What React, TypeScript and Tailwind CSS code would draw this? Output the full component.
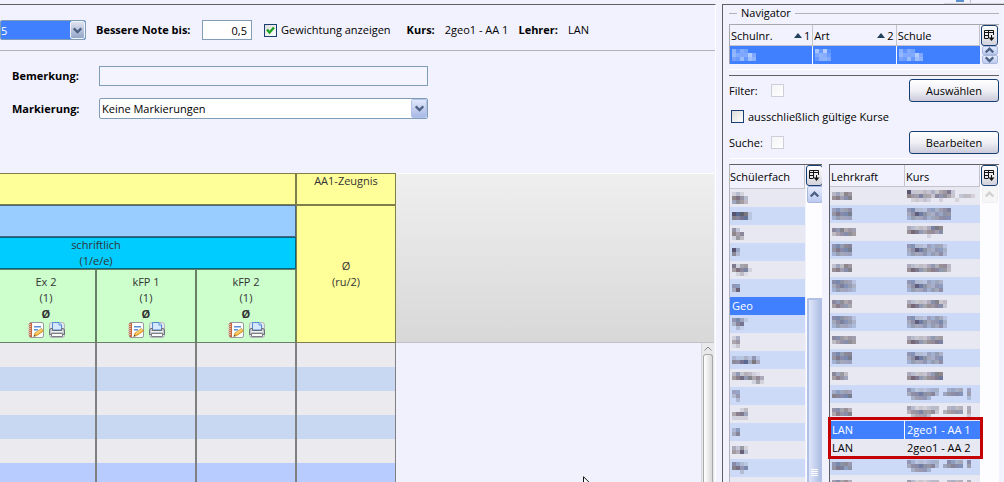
import { useState } from 'react'
import type { ReactNode } from 'react'

const schoolRow = [['646400', '858698', '747596'], ['85b20', '66940', '57680'], ['646400', '858698', '747596']]

// each entry is a list of mosaic lines, one hex digit per block
const subjects = [
  { blocks: ['2420', '9a74', '6874'] },
  { blocks: ['cbca2', '989a2'] },
  { blocks: ['730', '968', '274'] },
  { blocks: ['c5', '83'] },
  { blocks: ['92670', '7a892', '02410'] },
  { blocks: ['66', '5b'] },
  { name: 'Geo' },
  { blocks: ['6852', '4890', '0310'] },
  { blocks: ['25', '67', '13'] },
  { blocks: ['3224262', '879b5a5'] },
  { blocks: ['47354210', '79a79685', '00000262'] },
  { blocks: ['55', '36', '03'] },
  { blocks: ['0024', '6996', '2222'] },
  { blocks: ['36', '58'] },
  { blocks: ['5372', '75b4'] },
  { blocks: ['7532', '9a68', '0030'] },
  { blocks: ['5362', '7584'] },
]

const courses = [
  { a: ['46497', '89689'], b: ['c3334353679300000', '97696638786303442', '02323200200020000'] },
  { a: ['57567', '79789', '46555'], b: ['68332564678', '57b97546577', '46556456777'] },
  { a: ['879676', '467887'], b: ['5434359a9', '8b9768868', '000002000'] },
  { a: ['68688', '79789', '46555'], b: ['6733254552', '57b9754664', '4655646573'] },
  { a: ['36497', '89689'], b: ['54343575884', '8b976898774'] },
  { a: ['787652', '578764', '465543'], b: ['673325454', '57b975466', '465564657'] },
  { a: ['87867', '79776'], b: ['5434358934', '8b97687883'] },
  { a: ['787652', '578764', '465543'], b: ['6733254652', '57b9756684', '4655646573'] },
  { a: ['887676', '467887'], b: ['543435767', '8b9768899'] },
  { a: ['68688', '79789', '46555'], b: ['673325464', '57b975467', '465564657'] },
  { a: ['8674', '7976'], b: ['543435799', '8b976889a'] },
  { a: ['46565', '98789'], b: ['6423234400454505', '5779778305777706', '0466640000000003'] },
  { a: ['78685', '69789'], b: ['6423234400454505', '5779778305777706', '0466640000000003'] },
  { teacher: 'LAN', course: '2geo1 - AA 1', active: true },
  { teacher: 'LAN', course: '2geo1 - AA 2' },
  { a: ['68786', '79867'], b: ['6423234400764507', '5779778305787706', '0466640000000000'] },
  { a: ['68685', '69789'], b: ['6423234400454505', '5779778305777706'] },
]

function Mosaic({ lines, light = false }: { lines: string[]; light?: boolean }){
  const tints = light ? ['#ffffff', '#dfe8ff', '#b8c8ff'] : ['#38304e', '#544444', '#30406c', '#4c3848', '#404048']
  const cols = Math.max(...lines.map(l => l.length))
  return (
    <svg width={cols * 4} height={lines.length * 4} viewBox={`0 0 ${cols * 4} ${lines.length * 4}`} shapeRendering="crispEdges" aria-hidden="true">
      {lines.map((line, y) => line.split('').map((c, x) => (
        <rect key={`${x}-${y}`} x={x * 4} y={y * 4} width="4" height="4" fill={tints[(x * 2 + y) % tints.length]} opacity={parseInt(c, 16) / 15} />
      )))}
    </svg>
  )
}

function Chevron({ up = false, className = 'text-[#4d6185]' }: { up?: boolean; className?: string }){
  return (
    <svg width="9" height="7" viewBox="0 0 9 7" fill="none" stroke="currentColor" strokeWidth="2.4" className={className} aria-hidden="true">
      <path d={up ? 'M0.7 5.5 4.5 1.7 8.3 5.5' : 'M0.7 1.3 4.5 5.1 8.3 1.3'} />
    </svg>
  )
}

function ColumnButton(){
  return (
    <button type="button" aria-label="Spalten" className="flex h-[21px] w-[17px] shrink-0 items-center justify-center rounded-[3px] border border-[#173f73] bg-linear-to-b from-white to-[#d2d2dc]">
      <svg width="11" height="12" viewBox="0 0 11 12" fill="none" stroke="#111" aria-hidden="true">
        <path d="M4 8.5H.5v-8h9V5M.5 2.5h9M4.5.5v8M.5 5.5H5" />
        <path d="M4.500 7.500h6l-3 3.500z" fill="#111" stroke="none" />
        <path d="M7.500 5v3" />
      </svg>
    </button>
  )
}

function ScrollButton({ up = false, small = false, muted = false }: { up?: boolean; small?: boolean; muted?: boolean }){
  const size = small ? 'h-[9px]' : 'h-[17px]'
  const look = muted ? 'border-[#f0f0f2] bg-[#f6f6f6]' : 'border-[#a9b8dc] bg-linear-to-b from-[#e4ebff] to-[#bccaf0]'
  return (
    <button type="button" aria-label={up ? 'Nach oben' : 'Nach unten'} className={`flex w-4 shrink-0 items-center justify-center rounded-xs border ${size} ${look}`}>
      <Chevron up={up} className={muted ? 'text-[#d0d0d0]' : 'text-[#4d6185]'} />
    </button>
  )
}

function NoteIcon(){
  return (
    <svg width="16" height="16" viewBox="0 0 16 16" aria-hidden="true">
      <rect x="1.5" y=".5" width="14" height="15" rx="1.5" fill="#fff" stroke="#999aa0" />
      <path d="M1.500 1H4v14H1.500z" fill="#c8693d" />
      <path d="M0 2.500h3M0 4.500h3M0 6.500h3M0 8.500h3M0 10.500h3M0 12.500h3" stroke="#e0b8a0" />
      <path d="M6 4h7v1.500H6zM6 7h4v1.500H6z" fill="#5a8fdc" />
      <path d="M6 14.300 7 11l6.500-4.500 2 2.500L9 13.500z" fill="#f6b73c" stroke="#c98a2a" strokeWidth=".7" />
      <path d="m8 11.600 6-4.100" stroke="#ffe39a" />
      <path d="m5.500 14.700.8-2 1.400 1.300z" fill="#5a4630" />
    </svg>
  )
}

function PrinterIcon(){
  return (
    <svg width="16" height="16" viewBox="0 0 16 16" aria-hidden="true">
      <rect x=".5" y=".5" width="15" height="15" rx="2" fill="#e2e5e9" stroke="#b4b8bc" />
      <path d="M3.500 8V.5h6.500L12.500 3v5z" fill="#d5e8ff" stroke="#4f8ad6" />
      <path d="M10 .5V3h2.500" fill="#fff" stroke="#4f8ad6" />
      <path d="M.5 9Q.5 6.500 2 6.500h1.500v2h9v-2H14q1.500 0 1.500 2.500v3.500H.5z" fill="#c4c8cd" stroke="#6c7076" />
      <path d="M2.500 11.500h11v3h-11z" fill="#fff" stroke="#7c8086" />
      <path d="M2 9.500h12" stroke="#eef0f2" />
    </svg>
  )
}

function DropDown({ label, value, active = false, id }: { label?: string; value: string; active?: boolean; id: string }){
  return (
    <div className={`relative ${active ? 'w-[86px]' : 'w-[329px]'}`}>
      <select id={id} aria-label={label} className={`block w-full appearance-none rounded-xs border border-[#7f9db9] px-0.5 leading-[19px] outline-none ${active ? 'h-5 bg-[#4080ff] pl-0 text-white' : 'h-[21px] bg-white'}`}>
        <option>{value}</option>
      </select>
      <span className={`pointer-events-none absolute inset-y-0 right-0 my-px mr-px flex items-center justify-center rounded-xs border bg-linear-to-b ${active ? 'w-[15px] border-[#eef2fa] from-[#dfe3ef] to-[#94a5c9]' : 'w-4 border-[#b4c3e8] from-[#e1e8fb] to-[#a9b9e4]'}`}>
        <Chevron />
      </span>
    </div>
  )
}

function CheckBox({ id, label, checked, disabled = false, onChange }: { id: string; label?: string; checked: boolean; disabled?: boolean; onChange?: () => void }){
  return (
    <span className="relative flex h-[13px] w-[13px] shrink-0">
      <input
        id={id}
        type="checkbox"
        aria-label={label}
        checked={checked}
        disabled={disabled}
        onChange={()=> onChange?.()}
        className={`h-[13px] w-[13px] appearance-none border bg-linear-to-br ${disabled ? 'border-[#cfcfdb] from-[#f4f4f6] to-white' : 'border-[#1c3f73] from-[#dcdcda] to-white'}`}
      />
      {checked && (
        <svg width="13" height="13" viewBox="0 0 13 13" fill="none" stroke="#21a121" strokeWidth="2.4" className="pointer-events-none absolute inset-0" aria-hidden="true">
          <path d="M3 5.500 5.500 8.500 10 3.500" />
        </svg>
      )}
    </span>
  )
}

function ActionButton({ children }: { children: ReactNode }){
  return (
    <button type="button" className="h-[23px] w-[90px] rounded-[3px] border border-[#173f73] bg-linear-to-b from-white via-[#f0f0f5] to-[#cbcbdb]">{children}</button>
  )
}

function GradeTable(){
  const line = 'p-0 font-normal shadow-[inset_0_0_0_1px_rgba(0,0,0,0.5)]'
  const side = 'h-6 p-0 shadow-[inset_1px_0_0_#808080,inset_-1px_0_0_#808080]'
  const rows = ['bg-[#ebebef]', 'bg-[#c8d8f2]', 'bg-[#ebebef]', 'bg-[#c8d8f2]', 'bg-[#ebebef]', 'bg-[#b8ccff]']
  return (
    <table className="-ml-26 w-[500px] shrink-0 table-fixed border-separate border-spacing-0 text-center leading-4 text-[#333]">
      <thead>
        <tr className="h-8">
          <td colSpan={4} className={`bg-[#ffff99] ${line}`}></td>
          <th className={`bg-[#ffff99] align-top ${line}`}>AA1-Zeugnis</th>
        </tr>
        <tr className="h-8">
          <td colSpan={4} className={`bg-[#99ccff] ${line}`}></td>
          <th rowSpan={3} className={`bg-[#ffff99] ${line}`}>Ø<br />(ru/2)</th>
        </tr>
        <tr className="h-8">
          <th colSpan={4} className={`bg-[#00ccff] ${line}`}>schriftlich<br />(1/e/e)</th>
        </tr>
        <tr className="h-[74px]">
          <td className={`bg-[#ccffcc] ${line}`}></td>
          {['Ex 2', 'kFP 1', 'kFP 2'].map(name => (
            <th key={name} className={`bg-[#ccffcc] ${line}`}>
              {name}<br />(1)<br /><b>Ø</b>
              <span className="flex justify-center gap-[5px]">
                <button type="button" aria-label="Bearbeiten"><NoteIcon /></button>
                <button type="button" aria-label="Drucken"><PrinterIcon /></button>
              </span>
            </th>
          ))}
        </tr>
      </thead>
      <tbody>
        {rows.map((bg, i) => (
          <tr key={i} className={bg}>
            {[0, 1, 2, 3, 4].map(c => <td key={c} className={side}></td>)}
          </tr>
        ))}
      </tbody>
    </table>
  )
}

function GradePanel(){
  const [weights, setWeights] = useState(true)
  return (
    <main className="mt-1 mr-1.5 flex min-w-0 flex-1 flex-col overflow-hidden border-t border-r border-t-[#606064] border-r-white">
      <div className="flex h-[46px] shrink-0 items-center border-b border-[#b4b4b8] pt-[5px] whitespace-nowrap">
        <DropDown id="note" label="Note" value="5" active />
        <label htmlFor="bis" className="ml-2.5 w-[106px] font-bold">Bessere Note bis:</label>
        <input id="bis" defaultValue="0,5" className="h-5 w-[50px] border border-[#7f9db9] bg-white px-1 text-right outline-none" />
        <span className="ml-3 flex items-center gap-1">
          <CheckBox id="gewichtung" checked={weights} onChange={()=> setWeights(!weights)} />
          <label htmlFor="gewichtung">Gewichtung anzeigen</label>
        </span>
        <b className="ml-4">Kurs:</b>
        <span className="ml-2.5">2geo1 - AA 1</span>
        <b className="ml-2.5">Lehrer:</b>
        <span className="ml-2.5">LAN</span>
      </div>
      <div className="grid shrink-0 grid-cols-[87px_1fr] items-center gap-y-3 pt-[15px] pb-[54px] pl-3">
        <label htmlFor="bemerkung" className="font-bold">Bemerkung:</label>
        <input id="bemerkung" className="h-5 w-[329px] border border-[#7f9db9] bg-[#f4f4ff] px-1 outline-none" />
        <label htmlFor="markierung" className="font-bold">Markierung:</label>
        <DropDown id="markierung" value="Keine Markierungen" />
      </div>
      <div className="flex min-h-0 flex-1 overflow-hidden">
        <GradeTable />
        <div className="flex flex-1 flex-col bg-[#f1f1fd]">
          <div className="mr-px h-[170px] shrink-0 border-t border-b border-t-white border-b-[#c2c2c6] bg-linear-to-b from-[#efefef] to-[#d8d8d8]"></div>
          <div className="mr-px flex min-h-0 flex-1 flex-col items-center self-end border-l border-[#d8d8dc] bg-[#e9e9ec] px-px">
            <button type="button" aria-label="Nach oben" className="flex h-[11px] w-2.5 shrink-0 items-center justify-center">
              <svg width="8" height="5" viewBox="0 0 8 5" fill="none" stroke="#888" aria-hidden="true"><path d="M.5 4.500 4 1l3.500 3.500" /></svg>
            </button>
            <div className="w-2.5 flex-1 rounded-t-[3px] border border-b-0 border-[#a8a8a8] bg-linear-to-r from-white to-[#d9d9d9]"></div>
          </div>
        </div>
      </div>
      <svg width="13" height="20" viewBox="0 0 13 20" className="absolute top-[476px] left-[583px]" aria-hidden="true">
        <path d="M.5.7v16l4-4 2.500 6 2.500-1-2.500-5.500h5z" fill="#fff" stroke="#111" />
      </svg>
    </main>
  )
}

function SchoolTable(){
  const columns = [{ name: 'Schulnr.', sort: 1 }, { name: 'Art', sort: 2 }, { name: 'Schule', sort: 0 }]
  return (
    <div className="mt-[3px] flex border-t border-l border-[#a8a8ae]">
      <table className="w-full min-w-0 table-fixed border-separate border-spacing-0">
        <thead>
          <tr className="h-[21px]">
            {columns.map(col => (
              <th key={col.name} className="border-r border-b border-r-[#c4c4ca] border-b-[#c4c4ca] p-0 pt-px pl-px text-left font-normal">
                <span className="flex items-center">
                  {col.name}
                  {col.sort > 0 && (
                    <span className="ml-auto flex items-center gap-0.5 pr-0.5">
                      <svg width="8" height="5" viewBox="0 0 8 5" fill="#23405c" aria-hidden="true"><path d="M4 0 8 5H0z" /></svg>
                      {col.sort}
                    </span>
                  )}
                </span>
              </th>
            ))}
          </tr>
        </thead>
        <tbody>
          <tr className="h-[18px] bg-[#4080ff]">
            {schoolRow.map((lines, i) => (
              <td key={i} className="border-r border-white p-0 pl-0.5 last:border-[#4080ff]"><Mosaic lines={lines} light /></td>
            ))}
          </tr>
        </tbody>
      </table>
      <div className="flex w-[19px] shrink-0 flex-col items-center">
        <ColumnButton />
        <ScrollButton up small />
        <ScrollButton small />
      </div>
    </div>
  )
}

function SubjectList(){
  return (
    <div className="flex w-[93px] shrink-0 overflow-hidden border-t border-l border-t-[#606064] border-l-[#b4b4ba]">
      <table className="w-[75px] shrink-0 table-fixed self-start border-separate border-spacing-0">
        <thead>
          <tr className="h-6"><th className="border-r border-b border-[#c4c4ca] p-0 text-left font-normal">Schülerfach</th></tr>
        </thead>
        <tbody>
          {subjects.map((s, i) => (
            <tr key={i} className={`h-[18px] ${s.name ? 'bg-[#4080ff] text-white' : i % 2 ? 'bg-[#ccdaf7]' : 'bg-[#e8e8f2]'}`}>
              <td className="h-[18px] p-0 pl-0.5 leading-4">{s.blocks ? <Mosaic lines={s.blocks} /> : s.name}</td>
            </tr>
          ))}
        </tbody>
      </table>
      <div className="ml-px flex flex-1 flex-col items-center bg-[#fdfdff]">
        <ColumnButton />
        <ScrollButton up />
        <div className="mt-[95px] flex w-4 flex-1 flex-col items-center justify-end gap-px rounded-t-xs border-2 border-b-0 border-[#b0c0e6] bg-linear-to-r from-[#dfe6fb] to-[#adbde2] pb-1.5">
          {[0, 1, 2, 3].map(n => <span key={n} className="h-px w-[7px] bg-white"></span>)}
        </div>
      </div>
    </div>
  )
}

function CourseList(){
  return (
    <div className="relative flex min-w-0 flex-1 border-t border-l border-[#606064]">
      <table className="w-full min-w-0 table-fixed self-start border-separate border-spacing-0">
        <thead>
          <tr className="h-[22px]">
            <th className="w-[75px] border-r border-b border-[#c4c4ca] p-0 pt-0.5 pl-px text-left font-normal">Lehrkraft</th>
            <th className="border-r border-b border-[#c4c4ca] p-0 pt-0.5 pl-px text-left font-normal">Kurs</th>
          </tr>
        </thead>
        <tbody>
          {courses.map((c, i) => (
            <tr key={i} className={`h-[18px] ${c.active ? 'bg-[#4080ff] text-white' : i % 2 ? 'bg-[#ccdaf7]' : 'bg-[#e8e8f2]'}`}>
              <td className={`h-[18px] p-0 pl-0.5 leading-4 ${c.active ? 'border-r border-white' : ''}`}>{c.a ? <Mosaic lines={c.a} /> : c.teacher}</td>
              <td className="h-[18px] p-0 pl-0.5 leading-4 whitespace-nowrap">{c.b ? <Mosaic lines={c.b} /> : c.course}</td>
            </tr>
          ))}
        </tbody>
      </table>
      <div className="flex w-[19px] shrink-0 flex-col items-center bg-[#fdfdff]">
        <ColumnButton />
        <ScrollButton up muted />
      </div>
      <div className="pointer-events-none absolute top-[252px] right-4 -left-0.5 h-[42px] border-3 border-[#c40000]"></div>
    </div>
  )
}

function Navigator(){
  const [validOnly, setValidOnly] = useState(false)
  return (
    <aside className="mt-1 flex w-[282px] shrink-0 flex-col overflow-hidden border-t border-l border-[#606064] pr-[5px] pl-1.5">
      <fieldset className="min-w-0 border-t border-[#b4b4b8]">
        <legend className="ml-2 px-1 leading-4">Navigator</legend>
        <SchoolTable />
      </fieldset>
      <div className="mt-[5px] border-t border-white"></div>
      <div className="mt-[5px] border-t border-b border-t-[#606064] border-b-white pt-[3px] pb-1">
        <div className="flex items-center">
          <label htmlFor="filter" className="w-[42px]">Filter:</label>
          <CheckBox id="filter" checked={false} disabled />
          <span className="ml-auto flex"><ActionButton>Auswählen</ActionButton></span>
        </div>
        <div className="flex h-[29px] items-center gap-1 pl-0.5">
          <CheckBox id="valid" checked={validOnly} onChange={()=> setValidOnly(!validOnly)} />
          <label htmlFor="valid">ausschließlich gültige Kurse</label>
        </div>
        <div className="flex items-center">
          <label htmlFor="suche" className="w-[42px]">Suche:</label>
          <CheckBox id="suche" checked={false} disabled />
          <span className="ml-auto flex"><ActionButton>Bearbeiten</ActionButton></span>
        </div>
      </div>
      <div className="mt-[5px] flex min-h-0 flex-1 gap-[7px]">
        <SubjectList />
        <CourseList />
      </div>
    </aside>
  )
}

export default function App(){
  return (
    <div className="relative flex h-screen overflow-hidden bg-[#f2f2fe] font-['Open_Sans','Noto_Sans',sans-serif] text-[11px] leading-4 text-black">
      <GradePanel />
      <Navigator />
      <div className="absolute top-0 right-0 flex h-1 w-[60px] border-b border-[#d4d4d8]">
        <span className="ml-3 h-0.5 w-2 bg-[#5a8fcc]"></span>
        <span className="ml-1.5 w-px bg-[#c0c0c6]"></span>
      </div>
    </div>
  )
}
